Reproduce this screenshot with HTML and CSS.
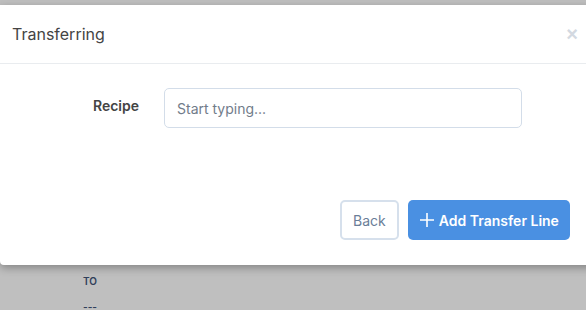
FILE: index.html
```html
<!DOCTYPE html>
<html lang="en">
<head>
    <meta charset="utf-8" />
    <title>Transferring</title>
    <link rel="stylesheet" href="styles.css">
</head>
<body>

    <section class="page">
        <p class="pageLabel">TO</p>
        <p class="pageLabel">---</p>
    </section>

    <div class="backdrop">
        <div class="modal">
            <div class="modalHeader">
                <h4 class="modalTitle">Transferring</h4>
                <button class="closeBtn">&times;</button>
            </div>

            <div class="modalBody">
                <div class="formRow">
                    <label class="formLabel" for="recipe">Recipe</label>
                    <input class="formInput" id="recipe" type="text" placeholder="Start typing...">
                </div>
            </div>

            <div class="modalFooter">
                <button class="btn btnBack">Back</button>
                <button class="btn btnAdd">
                    <svg class="plus" width="16" height="16" viewBox="0 0 16 16">
                        <path d="M8 1v14M1 8h14" stroke="#fff" stroke-width="1.6" fill="none"/>
                    </svg>
                    Add Transfer Line
                </button>
            </div>
        </div>
    </div>

</body>
</html>
```

FILE: styles.css
```css
  body{
    margin: 0;
    width: 586px;
    height: 310px;
    overflow: hidden;
    background-color: #fff;
    font-family: "Inter", "Noto Sans", sans-serif;
  }

  .page{
    padding: 275px 0 0 83px;
  }

  .pageLabel{
    margin: 0 0 14px;
    font-size: 10px;
    font-weight: 600;
    color: #3f5479;
  }

  .backdrop{
    position: absolute;
    top: 0;
    left: 0;
    width: 100%;
    height: 100%;
    background: rgba(0, 0, 0, 0.25);
  }

  .modal{
    margin-top: 5px;
    width: 600px;
    background: #fff;
    border-radius: 0 0 4px 4px;
    box-shadow: 0 3px 9px rgba(0, 0, 0, 0.3);
  }

  .modalHeader{
    display: flex;
    align-items: center;
    justify-content: space-between;
    height: 58px;
    padding: 0 8px 0 12px;
    border-bottom: 1px solid #e9ecef;
  }

  .modalTitle{
    margin: 0;
    font-size: 16px;
    font-weight: 400;
    color: #444;
  }

  .closeBtn{
    border: none;
    background: none;
    padding: 0;
    width: 20px;
    font-size: 20px;
    font-weight: 700;
    color: #d3d9e1;
    margin-right: 10px;
  }

  .modalBody{
    padding: 24px 0 0;
    height: 112px;
  }

  .formRow{
    display: flex;
    align-items: center;
    gap: 25px;
  }

  .formLabel{
    width: 139px;
    text-align: right;
    font-size: 14px;
    font-weight: 600;
    color: #444;
    margin-top: -6px;
  }

  .formInput{
    box-sizing: border-box;
    width: 358px;
    height: 40px;
    padding: 0 12px;
    border: 1px solid #d3dde9;
    border-radius: 5px;
    font-family: inherit;
    font-size: 14px;
    color: #444;
  }

  .formInput::placeholder{
    color: #717c8a;
  }

  .modalFooter{
    display: flex;
    gap: 9px;
    padding: 0 30px 25px 0;
    margin-left: 340px;
  }

  .btn{
    box-sizing: border-box;
    height: 40px;
    border-radius: 5px;
    font-family: inherit;
    font-size: 14px;
    cursor: pointer;
  }

  .btnBack{
    width: 59px;
    background: #fff;
    border: 2px solid #d6e0ec;
    color: #6a7e98;
  }

  .btnAdd{
    width: 163px;
    background: #4a90e2;
    border: none;
    color: #fff;
    font-weight: 600;
    display: flex;
    align-items: center;
    justify-content: center;
    gap: 4px;
  }
```
